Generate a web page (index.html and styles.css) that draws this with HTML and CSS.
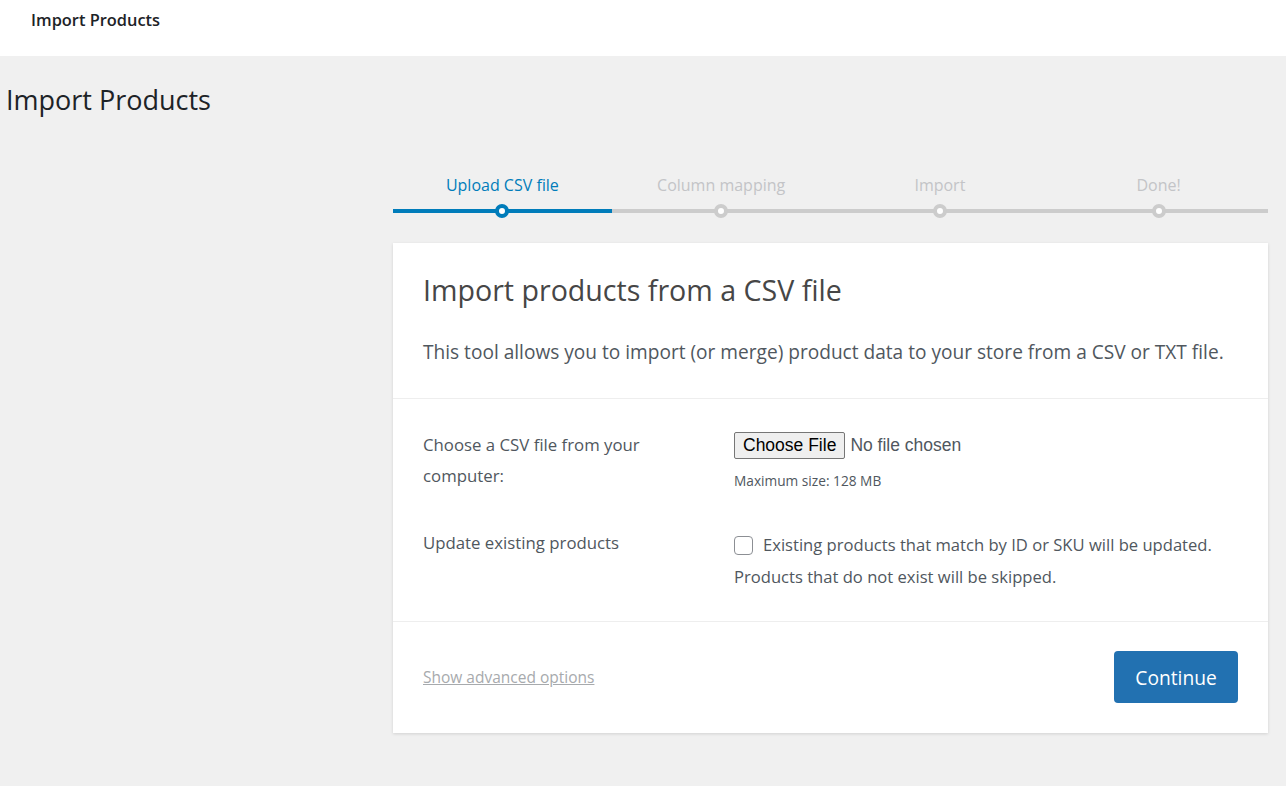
FILE: index.html
```html
<!DOCTYPE html>
<html>
<head>
<meta charset="utf-8">
<link rel="stylesheet" href="styles.css">
</head>
<body>
<header class="topbar"><h1 class="topbar-title">Import Products</h1></header>
<main class="wrap">
  <h2 class="page-title">Import Products</h2>
  <div class="importer">
    <ol class="steps">
      <li class="step active"><span class="step-label">Upload CSV file</span><span class="track"><span class="dot"></span></span></li>
      <li class="step"><span class="step-label">Column mapping</span><span class="track"><span class="dot"></span></span></li>
      <li class="step"><span class="step-label">Import</span><span class="track"><span class="dot"></span></span></li>
      <li class="step"><span class="step-label">Done!</span><span class="track"><span class="dot"></span></span></li>
    </ol>
    <form class="card">
      <section class="card-head">
        <h2 class="card-title">Import products from a CSV file</h2>
        <p class="card-desc">This tool allows you to import (or merge) product data to your store from a CSV or TXT file.</p>
      </section>
      <section class="card-body">
        <div class="row">
          <label class="row-label">Choose a CSV file from your computer:</label>
          <div class="row-field">
            <input type="file" class="file">
            <div class="small">Maximum size: 128 MB</div>
          </div>
        </div>
        <div class="row row-2">
          <label class="row-label">Update existing products</label>
          <div class="row-field">
            <label class="check"><input type="checkbox" class="cb"> Existing products that match by ID or SKU will be updated.</label>
            <div class="note">Products that do not exist will be skipped.</div>
          </div>
        </div>
      </section>
      <section class="card-foot">
        <a href="#" class="adv">Show advanced options</a>
        <button type="button" class="btn">Continue</button>
      </section>
    </form>
  </div>
</main>
</body>
</html>
```
FILE: styles.css
```css
* { box-sizing: border-box; }
html, body { margin: 0; padding: 0; }
body {
  background: #f0f0f0;
  font-family: "Open Sans", "Noto Sans", sans-serif;
  color: #50575e;
  height: 786px;
  overflow: hidden;
}
.topbar {
  background: #fff;
  height: 56px;
  padding: 0 31px;
  display: flex;
  align-items: center;
}
.topbar-title {
  margin: 0 0 17px;
  font-size: 16.4px;
  font-weight: 600;
  color: #1d2327;
}
.wrap { padding: 0 0 0 6px; }
.page-title {
  margin: 26px 0 0;
  font-size: 27px;
  font-weight: 400;
  color: #1d2327;
  line-height: 36px;
}
.importer {
  width: 875px;
  margin: 0 0 0 387px;
  padding-top: 56px;
}
.steps {
  list-style: none;
  margin: 0;
  padding: 0;
  display: flex;
}
.step {
  flex: 1;
  display: flex;
  flex-direction: column;
  align-items: center;
}
.step-label {
  font-size: 16px;
  color: #c3c4c7;
  line-height: 22px;
  height: 22px;
}
.step.active .step-label { color: #007cba; }
.track {
  margin-top: 13px;
  width: 100%;
  height: 4px;
  background: #ccc;
  position: relative;
  display: block;
}
.step.active .track { background: #007cba; }
.dot {
  position: absolute;
  left: 50%;
  top: 50%;
  width: 14px;
  height: 14px;
  margin: -7px 0 0 -7px;
  border-radius: 50%;
  background: #fff;
  border: 4px solid #ccc;
}
.step.active .dot { border-color: #007cba; }
.card {
  margin-top: 30px;
  background: #fff;
  box-shadow: 0 1px 3px rgba(0,0,0,0.13);
}
.card-head {
  padding: 27px 30px 32px;
  border-bottom: 1px solid #eee;
}
.card-title {
  margin: 0;
  font-size: 28.6px;
  font-weight: 400;
  color: #464646;
  line-height: 40px;
}
.card-desc {
  margin: 28px 0 0;
  font-size: 19.1px;
  line-height: 28px;
  color: #50575e;
}
.card-body {
  padding: 30px 30px 32px;
  border-bottom: 1px solid #eee;
}
.row { display: flex; }
.row-2 { margin-top: 42px; }
.row-label {
  width: 311px;
  flex: none;
  font-size: 16.8px;
  line-height: 31px;
  color: #50575e;
  padding-right: 40px;
}
.row-2 .row-label { margin-top: -6px; }
.row-field { flex: 1; }
.file {
  font-family: "Liberation Sans", Arial, sans-serif;
  font-size: 17.5px;
  color: #50575e;
  margin: 3px 0 0;
}
.file::file-selector-button {
  font-family: "Liberation Sans", Arial, sans-serif;
  font-size: 17.5px;
  color: #000;
  background: #efefef;
  border: 1px solid #767676;
  border-radius: 2px;
  padding: 2px 8px;
  margin-right: 5px;
}
.small {
  font-size: 13.7px;
  color: #50575e;
  margin-top: 12px;
}
.check {
  display: flex;
  align-items: center;
  font-size: 16.6px;
  line-height: 24px;
  color: #50575e;
}
.cb {
  appearance: none;
  -webkit-appearance: none;
  width: 19px;
  height: 19px;
  border: 1px solid #8c8f94;
  border-radius: 4px;
  margin: 0 10px 0 0;
  background: #fff;
}
.note {
  font-size: 16.6px;
  line-height: 24px;
  margin-top: 8px;
  color: #50575e;
}
.card-foot {
  padding: 29px 30px 30px;
  display: flex;
  justify-content: space-between;
  align-items: center;
}
.adv {
  font-size: 15.5px;
  color: #a7aaad;
  text-decoration: underline;
}
.btn {
  width: 124px;
  height: 52px;
  background: #2271b1;
  border: 0;
  border-radius: 4px;
  color: #fff;
  font-family: "Open Sans", "Noto Sans", sans-serif;
  font-size: 19.2px;
}
```
